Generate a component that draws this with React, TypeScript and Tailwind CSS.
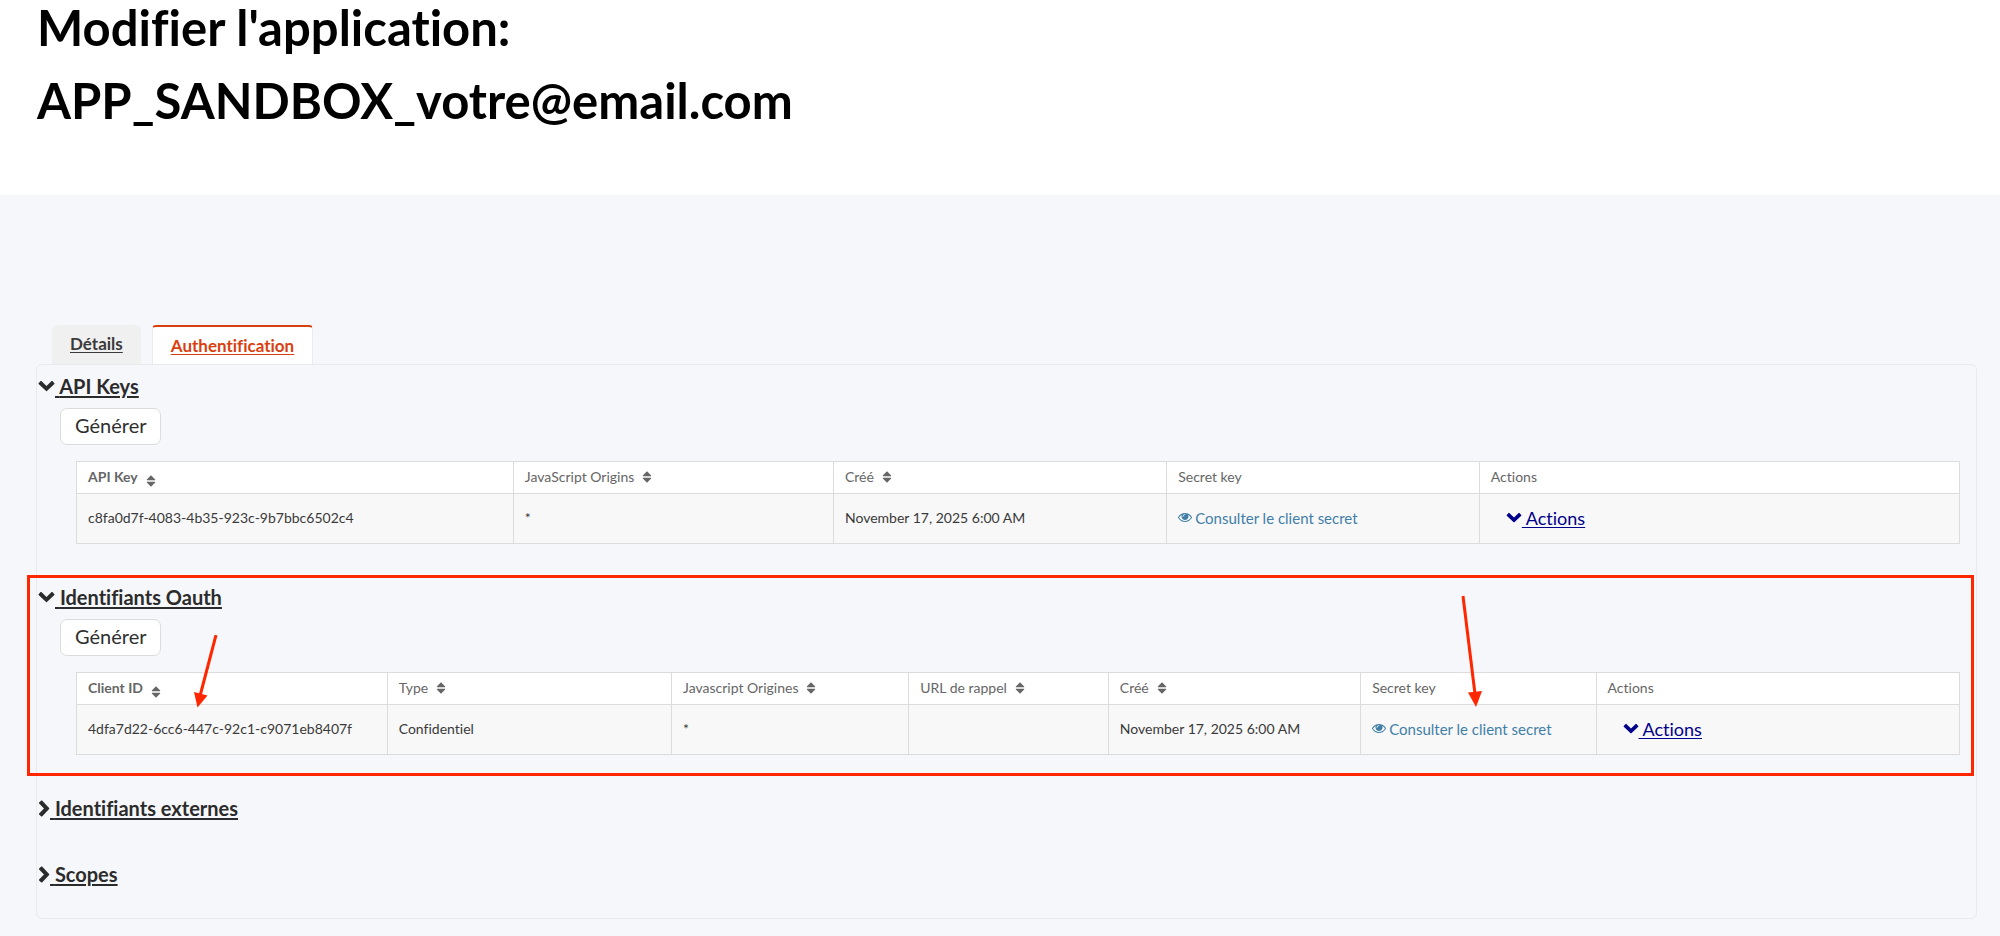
import React from "react";

type IconProps = { className?: string };

function ChevronDown({ className = "" }: IconProps) {
  return (
    <svg viewBox="0 0 17 12" fill="currentColor" aria-hidden="true" className={className}>
      <path d="M8.1 11.1 0.6 4.1Q0.2 3.7 0.6 3.3L2.6 1.1Q3 0.7 3.4 1.1L8.5 6 13.6 1.1Q14 0.7 14.4 1.1L16.4 3.3Q16.8 3.7 16.4 4.1L8.9 11.1Q8.5 11.5 8.1 11.1Z" />
    </svg>
  );
}

function ChevronRight({ className = "" }: IconProps) {
  return (
    <svg viewBox="0 0 12 17" fill="currentColor" aria-hidden="true" className={className}>
      <path d="M11.1 8.1 4.1 0.6Q3.7 0.2 3.3 0.6L1.1 2.6Q0.7 3 1.1 3.4L6 8.5 1.1 13.6Q0.7 14 1.1 14.4L3.3 16.4Q3.7 16.8 4.1 16.4L11.1 8.9Q11.5 8.5 11.1 8.1Z" />
    </svg>
  );
}

function Eye() {
  return (
    <svg viewBox="0 256 1792 1408" fill="currentColor" aria-hidden="true" className="h-[11px] w-[14px]">
      <path d="M1664 960q-152-236-381-353 61 104 61 225 0 185-131.5 316.5t-316.5 131.5-316.5-131.5-131.5-316.5q0-121 61-225-229 117-381 353 133 205 333.5 326.5t434.5 121.5 434.5-121.5 333.5-326.5zm-720-384q0-20-14-34t-34-14q-125 0-214.5 89.5t-89.5 214.5q0 20 14 34t34 14 34-14 14-34q0-86 61-147t147-61q20 0 34-14t14-34zm848 384q0 34-20 69-140 230-376.5 368.5t-499.5 138.5-499.5-139-376.5-368q-20-35-20-69t20-69q140-229 376.5-368t499.5-139 499.5 139 376.5 368q20 35 20 69z" />
    </svg>
  );
}

function Sort() {
  return (
    <svg viewBox="0 0 10 12" fill="currentColor" aria-hidden="true" className="h-3 w-[10px]">
      <path d="M5 0.2 9.2 4.6Q9.4 5.3 8.8 5.3H1.2Q0.6 5.3 0.8 4.6ZM5 11.8 9.2 7.4Q9.4 6.7 8.8 6.7H1.2Q0.6 6.7 0.8 7.4Z" />
    </svg>
  );
}

type Column = { label: string; width: string; sort?: "active" | "idle"; pointer?: boolean };

function DataTable({ label, columns, children }: { label: string; columns: Column[]; children: React.ReactNode }) {
  return (
    <table aria-label={label} className="w-full table-fixed border-collapse border border-[#dcdcdc] text-sm leading-5">
      <thead>
        <tr className="h-8 bg-white text-[#666]">
          {columns.map((c) => (
            <th
              key={c.label}
              scope="col"
              className={`relative border border-[#dcdcdc] px-[11px] pb-0.5 text-left ${c.width} ${c.sort === "active" ? "font-bold" : "font-normal"}`}
            >
              {c.sort ? (
                <button type="button" className="flex items-center gap-2">
                  {c.label}
                  <span className={c.sort === "active" ? "pt-2" : ""}>
                    <Sort />
                  </span>
                </button>
              ) : (
                c.label
              )}
              {c.pointer && (
                <svg
                  viewBox="0 0 30 112"
                  aria-hidden="true"
                  className="pointer-events-none absolute -top-[78px] left-24 h-28 w-[30px] text-[#ff2600]"
                >
                  <path d="M6 1 18 99" stroke="currentColor" strokeWidth="3" fill="none" />
                  <path d="M11 97.500 25 96 19 112Z" fill="currentColor" />
                </svg>
              )}
            </th>
          ))}
        </tr>
      </thead>
      <tbody>
        <tr className="h-[50px] bg-[#f8f8f8] text-[#3a3a3a]">{children}</tr>
      </tbody>
    </table>
  );
}

function Cell({ children }: { children?: React.ReactNode }) {
  return <td className="border border-[#dcdcdc] px-[11px] pb-0.5">{children}</td>;
}

function SecretLink() {
  return (
    <a href="#secret" className="flex items-center gap-[3px] whitespace-nowrap text-[15px] text-[#417fa8]">
      <Eye />
      Consulter le client secret
    </a>
  );
}

function ActionsLink() {
  return (
    <a href="#actions" className="ml-[15px] flex w-fit items-center text-lg leading-6 text-[#00008b]">
      <ChevronDown className="h-[11px] w-4" />
      <span className="whitespace-pre underline underline-offset-2"> Actions</span>
    </a>
  );
}

function SectionLink({ title, open, href }: { title: string; open?: boolean; href: string }) {
  return (
    <h2 className="text-[20px] font-bold leading-7 text-[#2b2b2b]">
      <a href={href} className="flex w-fit items-center">
        {open ? <ChevronDown className="h-3 w-[17px]" /> : <ChevronRight className="h-[17px] w-3" />}
        <span className="whitespace-pre underline underline-offset-2"> {title}</span>
      </a>
    </h2>
  );
}

function Generate() {
  return (
    <button
      type="button"
      className="mt-2 ml-[22px] h-[37px] rounded-[7px] border border-[#dcdcdc] bg-white px-[14px] pb-1 text-[20px] text-[#2f2f2f]"
    >
      Générer
    </button>
  );
}

const keyColumns: Column[] = [
  { label: "API Key", width: "w-[23.2%]", sort: "active" },
  { label: "JavaScript Origins", width: "w-[17%]", sort: "idle" },
  { label: "Créé", width: "w-[17.7%]", sort: "idle" },
  { label: "Secret key", width: "w-[16.6%]" },
  { label: "Actions", width: "w-[25.5%]" },
];

const oauthColumns: Column[] = [
  { label: "Client ID", width: "w-[16.5%]", sort: "active" },
  { label: "Type", width: "w-[15.1%]", sort: "idle" },
  { label: "Javascript Origines", width: "w-[12.6%]", sort: "idle" },
  { label: "URL de rappel", width: "w-[10.6%]", sort: "idle" },
  { label: "Créé", width: "w-[13.4%]", sort: "idle" },
  { label: "Secret key", width: "w-[12.5%]", pointer: true },
  { label: "Actions", width: "w-[19.3%]" },
];

export default function App() {
  return (
    <div className="flex min-h-screen flex-col bg-[#f6f7fb] font-['Lato',sans-serif] [font-variant-ligatures:none]">
      <header className="h-[195px] bg-white px-[37px]">
        <h1 className="-mt-[9px] text-[49px] font-bold leading-[73px] text-black">
          Modifier l'application:
          <br />
          APP_SANDBOX_votre@email.com
        </h1>
      </header>

      <main className="pt-[130px] pr-[23px] pb-[18px] pl-9">
        <nav className="flex gap-[11px] pl-4 text-[17px] font-bold leading-6">
          <a href="#details" className="h-[39px] rounded-t-md bg-[#f0f0f0] px-[18px] pt-[7px] text-[#3a3a3a] underline underline-offset-2">
            Détails
          </a>
          <a
            href="#auth"
            aria-current="page"
            className="h-[39px] rounded-t border-x border-t-2 border-x-[#ececec] border-t-[#d9400f] bg-white px-[18px] pt-[7px] text-[#d9400f] underline underline-offset-2"
          >
            Authentification
          </a>
        </nav>

        <div className="rounded-md border border-[#e9eaec] pl-px">
          <section className="h-[211px] pt-[7px]">
            <SectionLink title="API Keys" open href="#api-keys" />
            <Generate />
            <div className="mt-4 pr-4 pl-[38px]">
              <DataTable label="API Keys" columns={keyColumns}>
                <Cell>c8fa0d7f-4083-4b35-923c-9b7bbc6502c4</Cell>
                <Cell>*</Cell>
                <Cell>November 17, 2025 6:00 AM</Cell>
                <Cell>
                  <SecretLink />
                </Cell>
                <Cell>
                  <ActionsLink />
                </Cell>
              </DataTable>
            </div>
          </section>

          <section className="relative h-[211px] pt-[7px]">
            <SectionLink title="Identifiants Oauth" open href="#oauth" />
            <Generate />
            <div className="mt-4 pr-4 pl-[38px]">
              <DataTable label="Identifiants Oauth" columns={oauthColumns}>
                <Cell>4dfa7d22-6cc6-447c-92c1-c9071eb8407f</Cell>
                <Cell>Confidentiel</Cell>
                <Cell>*</Cell>
                <Cell />
                <Cell>November 17, 2025 6:00 AM</Cell>
                <Cell>
                  <SecretLink />
                </Cell>
                <Cell>
                  <ActionsLink />
                </Cell>
              </DataTable>
            </div>
            <div className="pointer-events-none absolute -top-px -left-[11px] right-0.5 h-[201px] border-[3px] border-[#ff2600]" />
            <svg
              viewBox="0 0 30 74"
              aria-hidden="true"
              className="pointer-events-none absolute top-[59px] left-[153px] h-[74px] w-[30px] text-[#ff2600]"
            >
              <path d="M25 0 9 61" stroke="currentColor" strokeWidth="3" fill="none" />
              <path d="M3 57 16.500 60.500 6.500 72.500Z" fill="currentColor" />
            </svg>
          </section>

          <section className="h-[66px] pt-[7px]">
            <SectionLink title="Identifiants externes" href="#externes" />
          </section>
          <section className="h-[65px] pt-[7px]">
            <SectionLink title="Scopes" href="#scopes" />
          </section>
        </div>
      </main>
    </div>
  );
}
